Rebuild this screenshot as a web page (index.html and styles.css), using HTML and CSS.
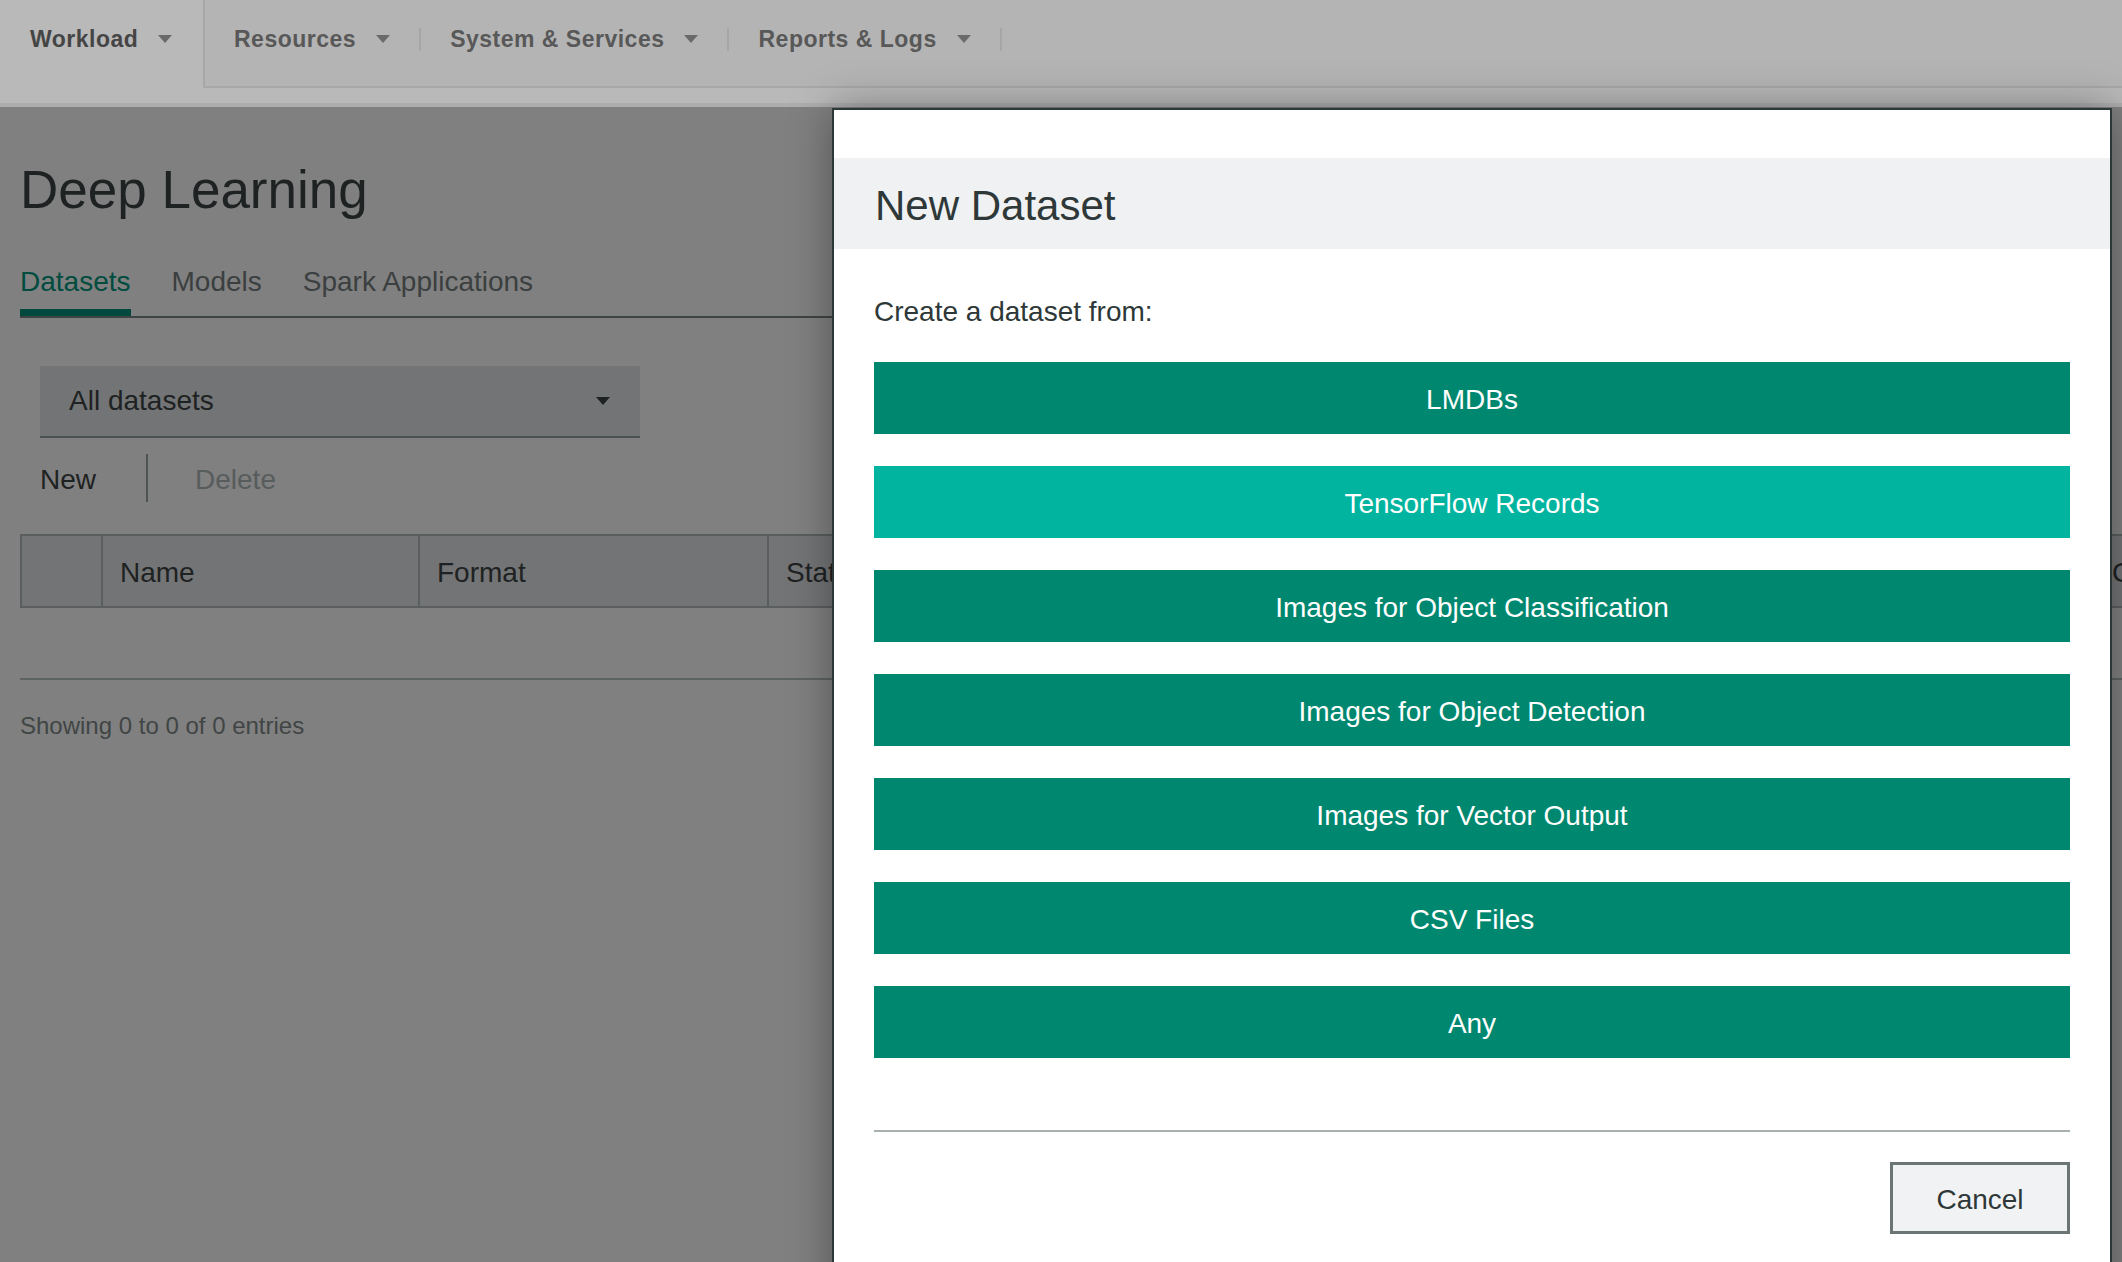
FILE: index.html
```html
<!DOCTYPE html>
<html lang="en">
<head>
<meta charset="utf-8">
<title>Deep Learning - New Dataset</title>
<link rel="stylesheet" href="styles.css">
</head>
<body>
<header class="topnav">
  <div class="nav-active">
    <div class="nav-item nav-item-first">Workload<span class="caret"></span></div>
  </div>
  <nav class="nav-rest">
    <div class="nav-item">Resources<span class="caret"></span></div>
    <span class="nav-sep"></span>
    <div class="nav-item">System &amp; Services<span class="caret"></span></div>
    <span class="nav-sep"></span>
    <div class="nav-item">Reports &amp; Logs<span class="caret"></span></div>
    <span class="nav-sep"></span>
  </nav>
</header>

<main class="page">
  <h1 class="page-title">Deep Learning</h1>
  <div class="tabs">
    <span class="tab tab-active">Datasets</span>
    <span class="tab">Models</span>
    <span class="tab">Spark Applications</span>
  </div>

  <div class="select">
    <span>All datasets</span>
    <span class="select-caret"></span>
  </div>

  <div class="actions">
    <span class="action">New</span>
    <span class="action-sep"></span>
    <span class="action action-disabled">Delete</span>
  </div>

  <div class="table">
    <div class="thead">
      <div class="th"></div>
      <div class="th">Name</div>
      <div class="th">Format</div>
      <div class="th">Status</div>
      <div class="th">Created</div>
    </div>
    <div class="tbody"></div>
  </div>

  <p class="showing">Showing 0 to 0 of 0 entries</p>
</main>

<div class="modal">
  <div class="modal-header">New Dataset</div>
  <div class="modal-body">
    <p class="modal-intro">Create a dataset from:</p>
    <div class="choices">
      <button class="choice">LMDBs</button>
      <button class="choice choice-hover">TensorFlow Records</button>
      <button class="choice">Images for Object Classification</button>
      <button class="choice">Images for Object Detection</button>
      <button class="choice">Images for Vector Output</button>
      <button class="choice">CSV Files</button>
      <button class="choice">Any</button>
    </div>
    <div class="modal-footer">
      <button class="cancel">Cancel</button>
    </div>
  </div>
</div>
</body>
</html>
```

FILE: styles.css
```css
* { box-sizing: border-box; }

html, body {
  margin: 0;
  padding: 0;
}

body {
  width: 2122px;
  height: 1262px;
  overflow: hidden;
  position: relative;
  background: #808080;
  font-family: "Liberation Sans", Arial, Helvetica, sans-serif;
  color: #1e2222;
}

/* ---------- top navigation ---------- */
.topnav {
  display: flex;
  height: 107px;
  background: #b9b9b9;
  border-bottom: 4px solid #adadad;
}

.nav-active {
  width: 203px;
  flex: none;
  padding-left: 30px;
}

.nav-rest {
  flex: 1;
  display: flex;
  align-items: center;
  height: 88px;
  background: #b4b4b4;
  border-left: 2px solid #a8a8a8;
  border-bottom: 2px solid #a8a8a8;
  padding-bottom: 8px;
}

.nav-item {
  display: flex;
  align-items: center;
  height: 78px;
  padding: 0 29px;
  font-size: 23px;
  font-weight: bold;
  letter-spacing: 0.5px;
  color: #585858;
  white-space: nowrap;
}

.nav-item-first {
  padding: 0;
  color: #454545;
}

.caret {
  width: 0;
  height: 0;
  margin-left: 20px;
  border-left: 7px solid transparent;
  border-right: 7px solid transparent;
  border-top: 8px solid #6a6a6a;
}

.nav-sep {
  width: 2px;
  height: 23px;
  background: #a6a6a6;
}

/* ---------- page ---------- */
.page {
  padding: 0 20px;
}

.page-title {
  margin: 53px 0 0;
  font-size: 53px;
  line-height: 60px;
  font-weight: normal;
  color: #1e2222;
}

.tabs {
  display: flex;
  gap: 41px;
  margin-top: 46px;
  border-bottom: 2px solid #3e4343;
}

.tab {
  font-size: 28px;
  line-height: 32px;
  padding-bottom: 11px;
  border-bottom: 7px solid transparent;
  color: #3b3f3f;
}

.tab-active {
  color: #004c3f;
  border-bottom-color: #00493c;
}

.select {
  display: flex;
  align-items: center;
  justify-content: space-between;
  width: 600px;
  height: 72px;
  margin: 48px 0 0 20px;
  padding: 0 30px 0 29px;
  background: #737475;
  border-bottom: 2px solid #4b5050;
  font-size: 28px;
  color: #1e2222;
}

.select-caret {
  width: 0;
  height: 0;
  border-left: 7px solid transparent;
  border-right: 7px solid transparent;
  border-top: 8px solid #1e2222;
}

.actions {
  display: flex;
  align-items: center;
  height: 48px;
  margin: 16px 0 0 20px;
  font-size: 28px;
}

.action {
  padding-top: 3px;
  color: #1e2222;
}
.action-disabled { color: #575c5c; }

.action-sep {
  width: 2px;
  height: 48px;
  margin: 0 47px 0 50px;
  background: #4e5353;
}

.table {
  width: max-content;
  margin-top: 32px;
}

.thead {
  display: grid;
  grid-template-columns: 81px 317px 349px 1326px 400px;
  height: 74px;
  background: #737475;
  border-top: 2px solid #5a5e5e;
  border-bottom: 2px solid #5a5e5e;
}

.th {
  display: flex;
  align-items: center;
  padding: 4px 0 0 17px;
  border-left: 2px solid #5a5e5e;
  font-size: 28px;
  color: #1e2222;
}

.tbody {
  height: 72px;
  border-bottom: 2px solid #5d6262;
}

.showing {
  margin: 32px 0 0;
  font-size: 24px;
  line-height: 28px;
  color: #404545;
}

/* ---------- modal ---------- */
.modal {
  position: absolute;
  top: 108px;
  left: 832px;
  width: 1280px;
  height: 1200px;
  background: #ffffff;
  border: 2px solid #2c3737;
  padding-top: 48px;
  box-shadow: 0 0 40px rgba(0, 0, 0, 0.35);
}

.modal-header {
  display: flex;
  align-items: center;
  height: 91px;
  padding: 5px 0 0 41px;
  background: #f0f1f2;
  font-size: 42px;
  line-height: 1;
  color: #2e3838;
}

.modal-body {
  padding: 0 40px;
}

.modal-intro {
  margin: 47px 0 0;
  font-size: 28px;
  line-height: 32px;
  color: #2e3838;
}

.choices {
  display: flex;
  flex-direction: column;
  gap: 32px;
  margin-top: 34px;
}

.choice {
  height: 72px;
  border: none;
  margin: 0;
  padding: 3px 0 0;
  background: #00876f;
  color: #ffffff;
  font-family: inherit;
  font-size: 28px;
}

.choice-hover {
  background: #00b4a0;
}

.modal-footer {
  display: flex;
  justify-content: flex-end;
  margin-top: 72px;
  padding-top: 30px;
  border-top: 2px solid #a9b0b0;
}

.cancel {
  width: 180px;
  height: 72px;
  margin: 0;
  padding: 4px 0 0;
  background: #f1f2f3;
  border: 3px solid #6c7575;
  color: #2e3838;
  font-family: inherit;
  font-size: 28px;
}
```
